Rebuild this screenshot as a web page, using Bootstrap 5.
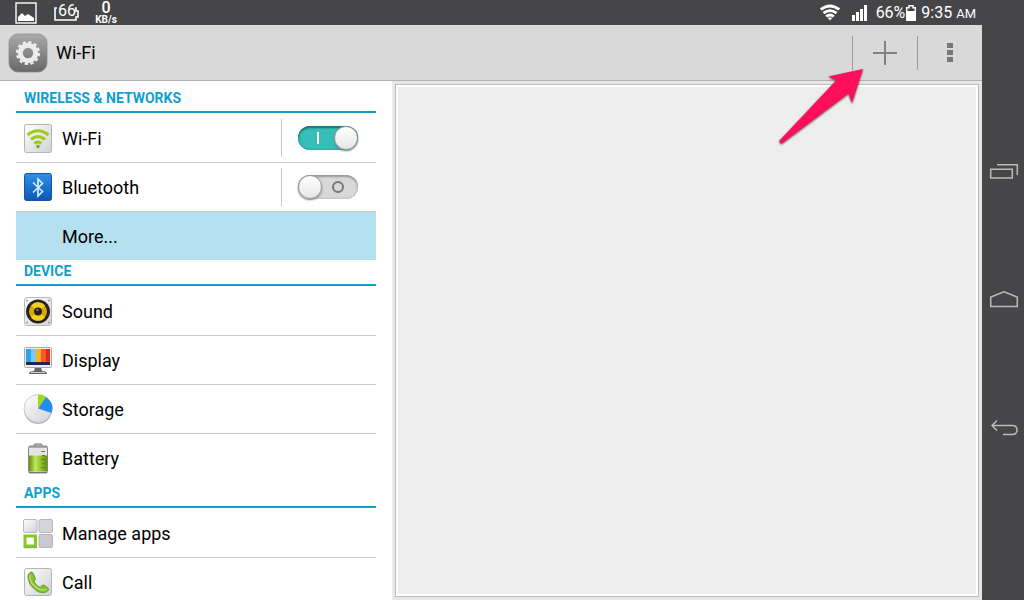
<!DOCTYPE html>
<html lang="en">
<head>
<meta charset="utf-8">
<meta name="viewport" content="width=device-width, initial-scale=1">
<title>Settings - Wi-Fi</title>
<link href="https://cdn.jsdelivr.net/npm/bootstrap@5.3.0/dist/css/bootstrap.min.css" rel="stylesheet">
<style>
  body { font-family: Roboto, "Noto Sans", sans-serif; color: #000; background: #fff; }
  svg { display: block; flex: none; }
  .shell { height: 100vh; }
  .status-bar { height: 25px; background: #464648; color: #fff; font-size: 16px; line-height: 25px; padding: 0 6px 0 14px; }
  .charge { width: 26px; height: 25px; margin-left: 16px; }
  .charge-text { font-size: 16px; line-height: 22px; top: 0; left: 0; right: 0; }
  .net-speed { width: 26px; height: 25px; margin-left: 13px; text-align: center; }
  .net-speed b { display: block; font-size: 16px; line-height: 15px; font-weight: 500; }
  .net-speed span { display: block; font-size: 10px; line-height: 10px; font-weight: 700; }
  .meridiem { font-size: 13px; }
  .app-bar { height: 56px; background: #d9d9d9; border-bottom: 1px solid #b2b2b2; padding-left: 8px; }
  .app-bar h1 { font-size: 18px; line-height: 24px; font-weight: 400; margin-left: 8px; }
  .tool { width: 65px; height: 34px; border: 0; border-left: 1px solid #999; border-radius: 0; padding: 0; }
  .pointer { right: 114px; top: 27px; pointer-events: none; z-index: 3; }
  .pointer path { filter: drop-shadow(0 1px 1px #555); }
  .side { width: 392px; padding: 0 16px; overflow: hidden; }
  .group-title { font-size: 14px; line-height: 22px; height: 26px; font-weight: 700; color: #0f9fcf; border-bottom: 2px solid #0f9fcf; margin: 0 0 1px; padding-left: 8px; }
  .group-first { height: 32px; padding-top: 6px; }
  .entries > li { border-bottom: 1px solid #c8c8c8; }
  .entries > li:last-child { border-bottom: 0; }
  .entry { height: 48px; font-size: 18px; line-height: 24px; color: #000; padding-top: 2px; padding-left: 6px; gap: 8px; }
  .entry-icon { width: 32px; }
  .entry-active { background: #b5e0ef; }
  .switch-box { width: 95px; height: 38px; border-left: 1px solid #c8c8c8; padding-left: 16px; }
  .toggle { appearance: none; width: 60px; height: 24px; border-radius: 12px; margin: 0; position: relative; background: #d8d8d8; box-shadow: inset 0 2px 2px #999, inset 0 0 2px #999; }
  .toggle::before { content: ""; position: absolute; left: 0; top: 0; width: 24px; height: 24px; border-radius: 50%; background: linear-gradient(#fff, #e6e6e6); border: 1px solid #999; box-shadow: 0 1px 2px #777; }
  .toggle::after { content: ""; position: absolute; left: 34px; top: 6px; width: 12px; height: 12px; border: 2px solid #777; border-radius: 50%; }
  .toggle:checked { background: #38beb7; box-shadow: inset 0 2px 2px #16766f, inset 0 0 2px #16766f; }
  .toggle:checked::before { left: 36px; }
  .toggle:checked::after { left: 19px; width: 2px; border: 0; border-radius: 0; background: #fff; }
  .detail { background: #e6e6e6; padding: 3px 3px 3px 2px; border-left: 1px solid #eee; }
  .detail-pane { background: #eee; border: 1px solid #bebebe; box-shadow: inset 0 0 0 2px #fff; }
  .nav-keys { width: 42px; background: #464648; }
  .nav-keys .btn { width: 42px; height: 128px; padding: 0 0 0 2px; border: 0; }
</style>
<script src="https://cdn.jsdelivr.net/npm/bootstrap@5.3.0/dist/js/bootstrap.bundle.min.js"></script>
</head>
<body>
<div class="shell d-flex overflow-hidden">
  <div class="d-flex flex-column flex-grow-1">
    <div class="status-bar d-flex align-items-center flex-shrink-0">
      <svg width="24" height="23" viewBox="0 0 24 23"><rect x="2" y="2" width="20" height="20" fill="none" stroke="#fff" stroke-width="1.4"/><path d="M4 20V16L8 12 11 15 14 13 20 17V20Z" fill="#fff"/></svg>
      <div class="charge position-relative">
        <svg width="26" height="25" viewBox="0 0 26 25"><path d="M3 8H1V20H22V17H24V11H22V8H21" fill="none" stroke="#fff" stroke-width="1.6"/></svg>
        <span class="charge-text position-absolute text-center">66</span>
      </div>
      <div class="net-speed"><b>0</b><span>KB/s</span></div>
      <svg class="ms-auto" width="20" height="24" viewBox="0 0 20 24"><g fill="none" stroke="#fff" stroke-width="2.8"><path d="M.8 8.500Q10 1.500 19.2 8.500"/><path d="M3.500 12.200Q10 7 16.500 12.200"/><path d="M6.200 15.500Q10 12.400 13.800 15.500"/></g><path d="M7.800 17Q10 15.400 12.200 17L10 19.500Z" fill="#fff"/></svg>
      <svg class="ms-2 me-1" width="20" height="24" viewBox="0 0 20 24"><path d="M4 14h3v6H4zM8 11h3v9H8zM12 8h3v12h-3zM16 4h3v16h-3z" fill="#fff"/></svg>
      <span class="ms-1">66%</span>
      <svg width="12" height="24" viewBox="0 0 12 24"><path d="M1.700 11V6.700H4V4.700H8V6.700H10.300V11" fill="none" stroke="#fff" stroke-width="1.400"/><path d="M1 10H11V20H1Z" fill="#fff"/></svg>
      <span class="ms-1">9:35 <span class="meridiem">AM</span></span>
    </div>
    <header class="app-bar d-flex align-items-center flex-shrink-0">
      <svg width="40" height="40" viewBox="0 0 40 40">
        <defs><linearGradient id="tile" x2="0" y2="1"><stop stop-color="#aaa"/><stop offset="1" stop-color="#686868"/></linearGradient></defs>
        <rect x="1" y="1" width="38" height="38" rx="9" fill="url(#tile)" stroke="#888" stroke-width=".7"/>
        <circle cx="20" cy="20" r="7.700" fill="none" stroke="#ececec" stroke-width="5"/>
        <circle cx="20" cy="20" r="10.900" fill="none" stroke="#ececec" stroke-width="2.400" stroke-dasharray="3.200 2.507"/>
      </svg>
      <h1 class="mb-0">Wi-Fi</h1>
      <div class="d-flex ms-auto position-relative">
        <button class="tool btn d-flex align-items-center justify-content-center" type="button" aria-label="Add network"><svg width="24" height="24" viewBox="0 0 24 24"><path d="M0 12H24M12 0V24" stroke="#808080" stroke-width="2"/></svg></button>
        <button class="tool btn d-flex align-items-center justify-content-center" type="button" aria-label="More options"><svg width="6" height="20" viewBox="0 0 6 20"><path d="M0 0H6V5H0ZM0 7H6V12H0ZM0 14H6V19H0Z" fill="#777"/></svg></button>
        <svg class="pointer position-absolute" width="94" height="86" viewBox="774 63 94 86"><path d="M863 69 828.500 76.500 836 80.500 779.500 140.500Q779 144 782.500 143L848.500 93.500 852 103Z" fill="#ff0f5b"/></svg>
      </div>
    </header>
    <main class="d-flex flex-grow-1 overflow-hidden">
      <nav class="side flex-shrink-0" aria-label="Settings">
        <h2 class="group-title group-first">WIRELESS &amp; NETWORKS</h2>
        <ul class="entries list-unstyled mb-0">
          <li class="d-flex align-items-center">
            <a href="#wifi" class="entry d-flex align-items-center flex-grow-1 text-decoration-none">
              <svg width="32" height="32" viewBox="0 0 32 32"><defs><linearGradient id="plate" x2="1" y2="1"><stop stop-color="#fff"/><stop offset="1" stop-color="#d0d0d8"/></linearGradient></defs><rect x="2.500" y="1.500" width="27" height="28" rx="2" fill="url(#plate)" stroke="#b4b4b4"/><g fill="none" stroke="#9fca1c" stroke-width="3"><path d="M5.500 12Q16 3.500 26.500 12"/><path d="M9 16.500Q16 10.500 23 16.500"/><path d="M12.500 20.500Q16 17.500 19.500 20.500"/></g><circle cx="16" cy="23.500" r="1.700" fill="#7caa0d"/></svg>
              Wi-Fi</a>
            <div class="switch-box d-flex align-items-center"><input class="toggle" type="checkbox" role="switch" aria-label="Wi-Fi" checked></div>
          </li>
          <li class="d-flex align-items-center">
            <a href="#bluetooth" class="entry d-flex align-items-center flex-grow-1 text-decoration-none">
              <svg width="32" height="32" viewBox="0 0 32 32"><defs><linearGradient id="blue" x2="0" y2="1"><stop stop-color="#2f8fe6"/><stop offset="1" stop-color="#0b58b5"/></linearGradient></defs><rect x="2.500" y="1.500" width="27" height="27" rx="2" fill="url(#blue)" stroke="#17569b"/><path d="M11 10.500 20.500 19.500 16 24V7L20.500 11.500 11 20.500" fill="none" stroke="#d5ecff" stroke-width="1.700"/></svg>
              Bluetooth</a>
            <div class="switch-box d-flex align-items-center"><input class="toggle" type="checkbox" role="switch" aria-label="Bluetooth"></div>
          </li>
          <li><a href="#more" class="entry entry-active d-flex align-items-center text-decoration-none"><span class="entry-icon"></span>More...</a></li>
        </ul>
        <h2 class="group-title">DEVICE</h2>
        <ul class="entries list-unstyled mb-0">
          <li><a href="#sound" class="entry d-flex align-items-center text-decoration-none">
            <svg width="32" height="32" viewBox="0 0 32 32"><rect x="2.500" y="1.500" width="27" height="28" rx="2.500" fill="url(#plate)" stroke="#bbb"/><g fill="#999"><circle cx="5" cy="4.500" r="1"/><circle cx="27" cy="4.500" r="1"/><circle cx="5" cy="26.500" r="1"/><circle cx="27" cy="26.500" r="1"/></g><circle cx="16" cy="15.500" r="12" fill="#242424"/><circle cx="16" cy="15.500" r="9" fill="#d9a900"/><path d="M16 15.500 9 9.500A9 9 0 0 1 23 9.500ZM16 15.500 23 21.500A9 9 0 0 1 9 21.500Z" fill="#f5cf22"/><circle cx="16" cy="15.500" r="4" fill="#202020"/><circle cx="15.500" cy="14" r="1.200" fill="#777"/></svg>
            Sound</a></li>
          <li><a href="#display" class="entry d-flex align-items-center text-decoration-none">
            <svg width="32" height="32" viewBox="0 0 32 32"><path d="M13 22H19L20 26Q25 26 25 29H7Q7 26 12 26Z" fill="#666"/><path d="M9 27.500H23" stroke="#ccc"/><rect x="2.500" y="2.500" width="27" height="20" rx="1" fill="#eee" stroke="#aaa"/><path d="M4 4H9V17H4Z" fill="#23a9f1"/><path d="M9 4H14V17H9Z" fill="#83c8ec"/><path d="M14 4H19V17H14Z" fill="#ffb01f"/><path d="M19 4H24V17H19Z" fill="#fa5b24"/><path d="M24 4H28V17H24Z" fill="#d82a1d"/><path d="M4 17H28V20H4Z" fill="#1b2848"/></svg>
            Display</a></li>
          <li><a href="#storage" class="entry d-flex align-items-center text-decoration-none">
            <svg width="32" height="32" viewBox="0 0 32 32"><circle cx="16" cy="16" r="14" fill="#888" opacity=".6"/><circle cx="16" cy="14.500" r="14" fill="url(#plate)" stroke="#bbb" stroke-width=".7"/><path d="M16 14.500 16 .5Q21 .5 24 3Z" fill="#9edb16"/><path d="M16 14.500 24 3Q33 9.500 29.500 19Z" fill="#268cee"/></svg>
            Storage</a></li>
          <li><a href="#battery" class="entry d-flex align-items-center text-decoration-none">
            <svg width="32" height="32" viewBox="0 0 32 32"><defs><linearGradient id="cell"><stop stop-color="#638f09"/><stop offset=".35" stop-color="#c0e75a"/><stop offset="1" stop-color="#659400"/></linearGradient></defs><rect x="12" y="1" width="8" height="3" rx="1" fill="#ccc" stroke="#777"/><rect x="6.500" y="3" width="19" height="27" rx="1.500" fill="#e5e5e5" stroke="#888"/><rect x="7" y="12.500" width="18" height="16" fill="url(#cell)"/><path d="M7 4H25M7 29.500H25" stroke="#777"/><path d="M19 8.500H23M20 12.500H23M19 16.500H23M20 20.500H23M19 24.500H23" stroke="#687a3c"/></svg>
            Battery</a></li>
        </ul>
        <h2 class="group-title">APPS</h2>
        <ul class="entries list-unstyled mb-0">
          <li><a href="#apps" class="entry d-flex align-items-center text-decoration-none">
            <svg width="32" height="32" viewBox="0 0 32 32"><g stroke="#aaa" stroke-width=".8"><rect x="1.500" y="1.500" width="13.500" height="13" rx="1.500" fill="url(#plate)"/><rect x="17" y="1.500" width="13.500" height="13" rx="1.500" fill="#d4d4d9"/><rect x="17" y="16.500" width="13.500" height="13" rx="1.500" fill="#c9c9d1"/></g><rect x="3" y="18" width="10.500" height="10" fill="#fff" stroke="#85c81f" stroke-width="3"/><path d="M1.500 29.700H15" stroke="#578d12" stroke-width=".7"/></svg>
            Manage apps</a></li>
          <li><a href="#call" class="entry d-flex align-items-center text-decoration-none">
            <svg width="32" height="32" viewBox="0 0 32 32"><rect x="2.500" y="1.500" width="27" height="27" rx="2" fill="url(#plate)" stroke="#b4b4b4"/><path d="M8 5.500Q5 7.500 6 11.500 7 18.500 14 23.500 20 27.500 25 24.500 28 22.500 26 21L22 18Q20 17.500 18 20.500 14 18.500 12 14.500 14 12.500 13 10.500L11 6Q10 4.500 8 5.500Z" fill="#84bf32" stroke="#5a932d" stroke-width=".8"/><path d="M8 7.500Q7 14.500 13 19.500 19 24.500 24 22.500" fill="none" stroke="#b9df6e" stroke-width="1.500"/></svg>
            Call</a></li>
        </ul>
      </nav>
      <section class="detail d-flex flex-grow-1" aria-label="Wi-Fi networks"><div class="detail-pane flex-grow-1"></div></section>
    </main>
  </div>
  <nav class="nav-keys d-flex flex-column align-items-center justify-content-center flex-shrink-0" aria-label="System">
    <button class="btn d-flex align-items-center justify-content-center" type="button" aria-label="Recent apps"><svg width="30" height="18" viewBox="0 0 30 18"><path d="M1.700 6.200H23.300V15H1.700ZM8 1.700H28.300V12" fill="none" stroke="#bbb" stroke-width="1.500"/></svg></button>
    <button class="btn d-flex align-items-center justify-content-center" type="button" aria-label="Home"><svg width="30" height="18" viewBox="0 0 30 18"><path d="M1.700 15.500V6L15 .8 28.300 6V15.500Z" fill="none" stroke="#bbb" stroke-width="1.500"/></svg></button>
    <button class="btn d-flex align-items-center justify-content-center" type="button" aria-label="Back"><svg width="30" height="18" viewBox="0 0 30 18"><path d="M8 1.500 3 6.500 8 11.500M3 6.500H23Q28 6.500 28 11T23 15.500H14" fill="none" stroke="#bbb" stroke-width="1.500"/></svg></button>
  </nav>
</div>
</body>
</html>
